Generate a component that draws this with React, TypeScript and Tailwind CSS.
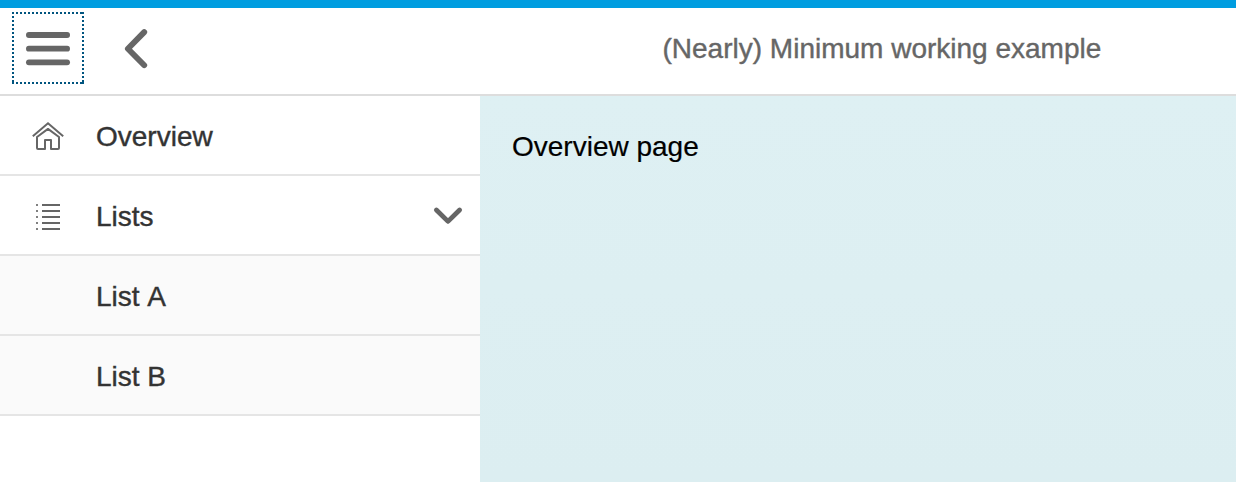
import type { ReactNode } from "react";

function MenuIcon() {
  return (
    <svg width="72" height="72" viewBox="0 0 72 72" fill="none">
      <g stroke="#00547f" strokeWidth="2" strokeDasharray="2 2" shapeRendering="crispEdges">
        <path d="M0 1H72" />
        <path d="M0 71H72" />
        <path d="M1 0V72" />
        <path d="M71 0V72" />
        <path d="M70 71H72M71 70V72" strokeDasharray="none" />
      </g>
      <g stroke="#666" strokeWidth="5.8" strokeLinecap="round">
        <path d="M16.9 23H55.1" />
        <path d="M16.9 36.7H55.1" />
        <path d="M16.9 50.3H55.1" />
      </g>
    </svg>
  );
}

function BackIcon() {
  return (
    <svg width="28" height="44" viewBox="0 0 28 44" fill="none" stroke="#666" strokeWidth="5.9" strokeLinecap="round" strokeLinejoin="round">
      <path d="M24.2 6.1L7.9 22.7L24.2 39.2" />
    </svg>
  );
}

function HomeIcon() {
  return (
    <svg width="32" height="32" viewBox="0 0 32 32" fill="none" stroke="#666" strokeWidth="2" strokeLinejoin="round">
      <path d="M0.8 17.2L16 4.3L31.2 17.2" strokeLinejoin="miter" />
      <path d="M5 18L16 9.9L27 18V28.9C27 29.5 26.6 29.9 26 29.9H19V21H13V29.9H6C5.4 29.9 5 29.5 5 28.9Z" />
    </svg>
  );
}

function ListIcon() {
  return (
    <svg width="32" height="32" viewBox="0 0 32 32" fill="none" stroke="#666" strokeWidth="2">
      <path d="M4 6h2M4 12h2M4 18h2M4 24h2M4 30h2" stroke="#808080" />
      <path d="M10 6h18M10 12h18M10 18h18M10 24h18M10 30h18" />
    </svg>
  );
}

function DownIcon() {
  return (
    <svg width="32" height="20" viewBox="0 0 32 20" fill="none" stroke="#666" strokeWidth="4.8" strokeLinecap="round" strokeLinejoin="round">
      <path d="M4.4 5L16 16.4L27.6 5" />
    </svg>
  );
}

type ItemProps = { label: string; icon?: ReactNode; expandable?: boolean; nested?: boolean };

function NavItem({ label, icon, expandable, nested }: ItemProps) {
  return (
    <li className={`flex h-20 items-center border-b-2 border-[#e5e5e5] pl-8 pr-4 text-[#333] ${nested ? "bg-[#fafafa]" : "bg-white"}`}>
      <span className="mr-8 w-8">{icon}</span>
      <span className="grow pt-[3px]">{label}</span>
      {expandable && <DownIcon />}
    </li>
  );
}

export default function App() {
  return (
    <div className="flex h-[482px] w-[1236px] flex-col overflow-hidden bg-white font-['Liberation_Sans',Arial,sans-serif] text-[28px] leading-8 [font-kerning:none] [-webkit-text-stroke:0.4px_currentColor]">
      <header className="flex h-24 shrink-0 border-t-8 border-b-2 border-t-[#009de0] border-b-[#ddd]">
        <div className="flex w-[662.5px] pl-3 pt-1">
          <button aria-label="Menu" className="h-[72px] w-[72px]"><MenuIcon /></button>
          <button aria-label="Back" className="ml-9 mt-[14px] h-11 w-7"><BackIcon /></button>
        </div>
        <h1 className="whitespace-nowrap pt-[25px] text-[#666]">(Nearly) Minimum working example</h1>
      </header>
      <div className="flex min-h-0 grow">
        <ul className="w-[480px] shrink-0">
          <NavItem label="Overview" icon={<HomeIcon />} />
          <NavItem label="Lists" icon={<ListIcon />} expandable />
          <NavItem label="List A" nested />
          <NavItem label="List B" nested />
        </ul>
        <main className="grow bg-linear-to-b from-[#def0f3] to-[#dceef1] pl-8 pt-[35px] text-black [-webkit-text-stroke:0.2px_currentColor]">Overview page</main>
      </div>
    </div>
  );
}
